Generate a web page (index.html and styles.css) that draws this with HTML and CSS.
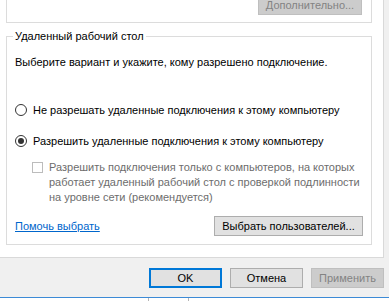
FILE: index.html
```html
<!DOCTYPE html>
<html lang="ru">
<head>
  <meta charset="UTF-8">
  <meta name="viewport" content="width=device-width, initial-scale=1.0">
  <title>Свойства системы</title>
  <link rel="stylesheet" href="styles.css">
</head>
<body>

  <div class="dialog">

    <div class="tab-page">

      <!-- Previous group, only its bottom edge is visible -->
      <div class="group group-top">
        <button class="btn" disabled>Дополнительно...</button>
      </div>

      <!-- Remote desktop -->
      <fieldset class="group group-rdp">
        <legend>Удаленный рабочий стол</legend>
        <p class="hint">Выберите вариант и укажите, кому разрешено подключение.</p>

        <label class="option option-first">
          <span class="radio"></span>
          <span>Не разрешать удаленные подключения к этому компьютеру</span>
        </label>
        <label class="option option-second">
          <span class="radio checked"></span>
          <span>Разрешить удаленные подключения к этому компьютеру</span>
        </label>
        <label class="option option-nla disabled">
          <span class="checkbox"></span>
          <span>Разрешить подключения только с компьютеров, на которых<br>работает удаленный рабочий стол с проверкой подлинности<br>на уровне сети (рекомендуется)</span>
        </label>

        <div class="group-footer">
          <a href="#" class="link">Помочь выбрать</a>
          <button class="btn btn-users">Выбрать пользователей...</button>
        </div>
      </fieldset>

    </div>

    <div class="dialog-buttons">
      <button class="btn btn-default">OK</button>
      <button class="btn">Отмена</button>
      <button class="btn" disabled>Применить</button>
    </div>

  </div>

  <div class="taskbar">
    <span class="task"></span>
  </div>

</body>
</html>
```

FILE: styles.css
```css
* {
  margin: 0;
  padding: 0;
  box-sizing: border-box;
  font-family: 'Liberation Sans', Arial, sans-serif;
}

body {
  width: 389px;
  height: 301px;
  overflow: hidden;
  background-color: #f0f0f0;
  color: #000;
  font-size: 11px;
  line-height: 16px;
}

/* White page of the tab control */
.tab-page {
  width: 384px;
  height: 258px;
  background-color: #fff;
  border-right: 1px solid #d9d9d9;
  border-bottom: 1px solid #d9d9d9;
}

.group {
  width: 366px;
  margin-left: 6px;
  border: 1px solid #dcdcdc;
}

.group-top {
  height: 23px;
  border-top: none;
  display: flex;
  justify-content: flex-end;
  padding-right: 9px;
}

.group-top .btn {
  width: 104px;
  margin-top: -5px;
}

.group-rdp {
  margin-top: 5px;
  padding: 0 8px 8px 8px;
}

.group-rdp legend {
  margin-left: -2px;
  padding: 0 2px;
}

.hint {
  margin-top: 10px;
  white-space: nowrap;
}

.option {
  display: flex;
  align-items: center;
  gap: 6px;
  white-space: nowrap;
}

.option-first {
  margin-top: 32px;
}

.option-second {
  margin-top: 15px;
}

.radio {
  width: 12px;
  height: 12px;
  border: 1px solid #333;
  border-radius: 50%;
  flex-shrink: 0;
  display: flex;
  align-items: center;
  justify-content: center;
}

.radio.checked::after {
  content: '';
  width: 6px;
  height: 6px;
  border-radius: 50%;
  background-color: #333;
}

.option-nla {
  margin-top: 11px;
  padding-left: 17px;
  align-items: flex-start;
  line-height: 15px;
}

.option.disabled {
  color: #6d6d6d;
}

.checkbox {
  width: 11px;
  height: 11px;
  margin-top: 2px;
  border: 1px solid #bcbcbc;
  flex-shrink: 0;
}

.group-footer {
  margin-top: 11px;
  display: flex;
  justify-content: space-between;
  align-items: center;
}

.link {
  color: #0066cc;
  text-decoration: underline;
}

.btn {
  height: 20px;
  width: 73px;
  font-size: 11px;
  line-height: 16px;
  color: #000;
  background-color: #e1e1e1;
  border: 1px solid #adadad;
}

.btn:disabled {
  color: #838383;
  background-color: #cccccc;
  border-color: #bfbfbf;
}

.btn-users {
  width: 149px;
}

.btn-default {
  border: 2px solid #0078d7;
}

.dialog-buttons {
  margin-top: 10px;
  padding-right: 5px;
  display: flex;
  justify-content: flex-end;
  gap: 8px;
}

/* Edge of the window underneath */
.taskbar {
  margin-top: 9px;
  height: 4px;
  background-color: #fff;
  border-top: 1px solid #3c8ad6;
}

.task {
  display: block;
  width: 41px;
  height: 4px;
  margin-left: 148px;
  border-left: 1px solid #b5b5b5;
  border-right: 1px solid #b5b5b5;
}
```
